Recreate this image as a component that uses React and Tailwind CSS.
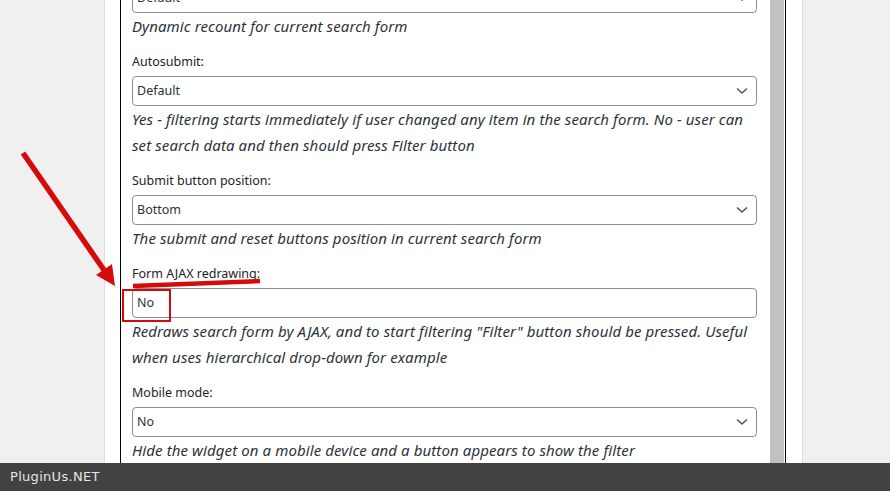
import React from "react";

const Chevron = () => (
  <svg width="12" height="8" viewBox="0 0 12 8" className="absolute right-[8px] top-1/2 -translate-y-1/2">
    <path d="M1 1.5 L6 6 L11 1.5" fill="none" stroke="#50575e" strokeWidth="1.6" />
  </svg>
);

const Select = ({ value, chevron = true }) => (
  <div className="relative h-[30px] w-[625px] rounded-[4px] border border-[#8c8f94] bg-white pl-[4px] flex items-center text-[12.5px] text-[#2c3338]">
    {value}
    {chevron && <Chevron />}
  </div>
);

const Label = ({ children }) => (
  <div className="mt-[13px] mb-[4px] h-[20px] leading-[20px] text-[12.5px] text-[#1d2327]">{children}</div>
);

const Desc = ({ children }) => (
  <div className="italic text-[15px] leading-[26px] text-[#2c3338] tracking-[0.1px]">{children}</div>
);

export default function App() {
  return (
    <div className="relative h-[491px] w-[890px] overflow-hidden flex flex-col" style={{ fontFamily: '"Noto Sans", "Open Sans", sans-serif' }}>
      <div className="flex-1 min-h-0 flex bg-[#f0f0f0] pl-[104px] overflow-hidden">
        <div className="w-[699px] h-full bg-white border-x border-[#dcdcde] pl-[15px] pr-[16px]">
          <div className="h-full border-x border-black flex">
            <div className="w-[649px] pl-[11px] pr-[13px] overflow-hidden">
              <div className="mt-[-17px]">
                <Select value="Default" />
                <Desc>Dynamic recount for current search form</Desc>
                <Label>Autosubmit:</Label>
                <Select value="Default" />
                <Desc>
                  Yes - filtering starts immediately if user changed any item in the search form. No - user can
                  <br />
                  set search data and then should press Filter button
                </Desc>
                <Label>Submit button position:</Label>
                <Select value="Bottom" />
                <Desc>The submit and reset buttons position in current search form</Desc>
                <Label>Form AJAX redrawing:</Label>
                <Select value="No" chevron={false} />
                <Desc>
                  Redraws search form by AJAX, and to start filtering "Filter" button should be pressed. Useful
                  <br />
                  when uses hierarchical drop-down for example
                </Desc>
                <Label>Mobile mode:</Label>
                <Select value="No" />
                <Desc>Hide the widget on a mobile device and a button appears to show the filter</Desc>
              </div>
            </div>
            <div className="w-[15px] h-full flex">
              <div className="w-[14px] h-full bg-[#c1c1c1]" />
            </div>
          </div>
        </div>
      </div>
      <div className="h-[28px] shrink-0 bg-[#424242] flex items-center pl-[10px] text-[13px] text-[#e6e6e6] tracking-[0.3px]" style={{ fontFamily: '"DejaVu Sans", sans-serif' }}>
        PluginUs.NET
      </div>
      <svg className="absolute left-0 top-0 pointer-events-none" width="890" height="491" viewBox="0 0 890 491">
        <line x1="23" y1="153" x2="104" y2="270" stroke="#d40b0b" strokeWidth="5.5" />
        <polygon points="115,286 96,275 112,264" fill="#d40b0b" />
        <line x1="133" y1="286" x2="260" y2="281" stroke="#d40b0b" strokeWidth="4.5" />
        <rect x="123" y="290" width="47" height="31" fill="none" stroke="#d40b0b" strokeWidth="2" />
      </svg>
    </div>
  );
}
